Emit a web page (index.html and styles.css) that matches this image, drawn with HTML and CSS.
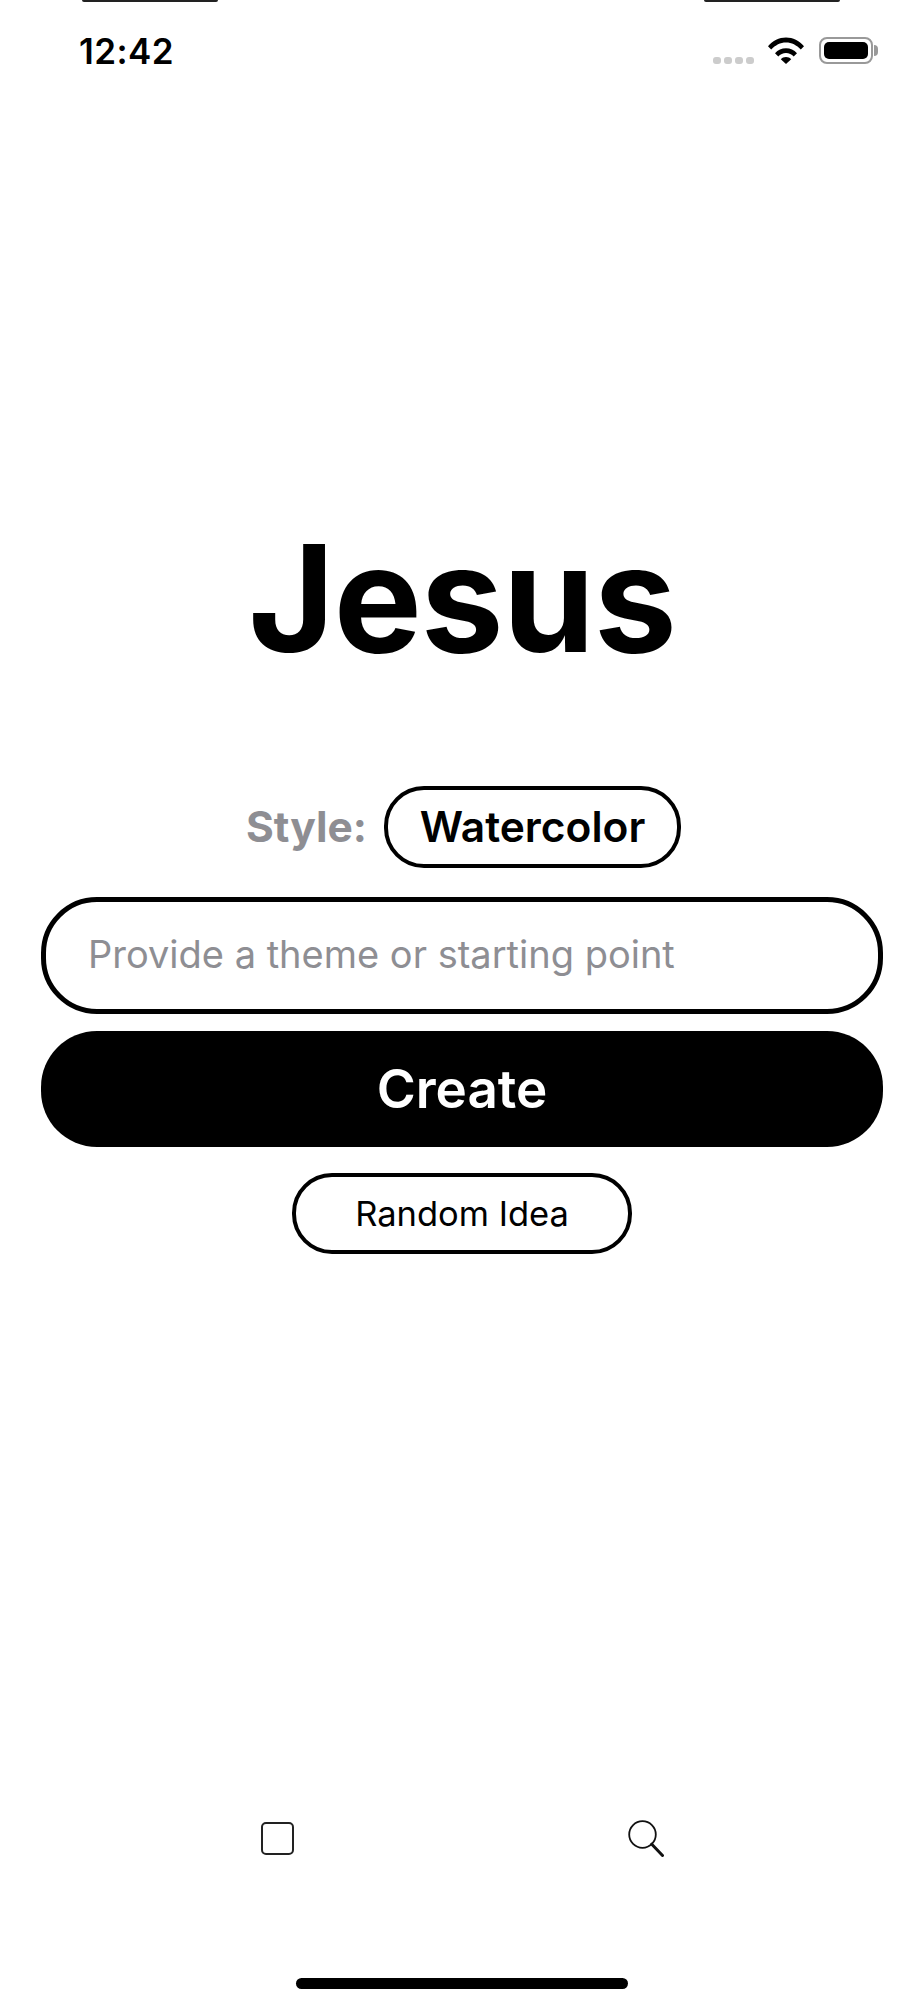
FILE: index.html
```html
<!DOCTYPE html>
<html lang="en">
<head>
<meta charset="utf-8">
<title>Jesus</title>
<link rel="stylesheet" href="styles.css">
</head>
<body>
<div class="phone">
  <div class="sensor-row">
    <span class="sensor-edge"></span>
    <span class="sensor-edge"></span>
  </div>
  <header class="status-bar">
    <span class="clock">12:42</span>
    <div class="status-icons">
      <div class="signal"><i></i><i></i><i></i><i></i></div>
      <svg class="wifi" width="36" height="27" viewBox="0 0 36 27">
        <path d="M0 9.200C4.800 3.500 11 .5 18 .5s13.200 3 18 8.700l-3.200 3.300C28.700 8 23.600 5.400 18 5.400S7.300 8 3.200 12.500z"/>
        <path d="M7 16.200C9.900 13 13.700 11.200 18 11.200s8.100 1.800 11 5l-3.300 3.300c-2-2.200-4.700-3.500-7.700-3.500s-5.700 1.300-7.700 3.500z"/>
        <path d="M12.800 22.200c1.300-1.500 3.100-2.300 5.200-2.300s3.900.8 5.200 2.300L18 27z"/>
      </svg>
      <div class="battery"><div class="battery-level"></div></div>
    </div>
  </header>

  <main class="composer">
    <h1 class="title">Jesus</h1>
    <div class="style-row">
      <span class="style-label">Style:</span>
      <button class="pill pill-style">Watercolor</button>
    </div>
    <div class="theme-input">Provide a theme or starting point</div>
    <button class="create">Create</button>
    <button class="pill pill-random">Random Idea</button>
  </main>

  <nav class="tabs">
    <span class="tab-square"></span>
    <svg class="tab-search" width="36" height="37" viewBox="0 0 36 37" fill="none">
      <circle cx="14.500" cy="14.500" r="13.300" stroke="#111" stroke-width="1.800"/>
      <path d="M23.800 24.200L34.500 35.500" stroke="#111" stroke-width="3" stroke-linecap="round"/>
    </svg>
  </nav>
  <div class="home-indicator"></div>
</div>
</body>
</html>
```
FILE: styles.css
```css
* { box-sizing: border-box; }

html, body {
  margin: 0;
  background: #fff;
}

.phone {
  width: 924px;
  height: 2000px;
  display: flex;
  flex-direction: column;
  font-family: Inter, "Liberation Sans", sans-serif;
  color: #000;
  overflow: hidden;
}

.sensor-row {
  display: flex;
  justify-content: space-between;
  padding: 0 84px 0 82px;
  height: 37px;
}

.sensor-edge {
  width: 136px;
  height: 2px;
  background: #222;
  border-radius: 0 0 8px 8px;
}

.status-bar {
  display: flex;
  justify-content: space-between;
  align-items: center;
  height: 27px;
  padding: 0 51px 0 79px;
}

.clock {
  margin-top: 2px;
  font-size: 35px;
  font-weight: 600;
  line-height: 27px;
  letter-spacing: 0.4px;
}

.status-icons {
  display: flex;
  align-items: flex-start;
}

.signal {
  display: flex;
  gap: 3px;
  margin: 20px 14px 0 0;
}

.signal i {
  width: 8px;
  height: 7px;
  border-radius: 3px;
  background: #ccc;
}

.wifi { margin-right: 15px; }

.battery {
  position: relative;
  width: 54px;
  height: 27px;
  padding: 3px;
  border: 2px solid #999;
  border-radius: 8px;
}

.battery::after {
  content: "";
  position: absolute;
  top: 6px;
  right: -7px;
  width: 4px;
  height: 11px;
  background: #999;
  border-radius: 0 4px 4px 0;
}

.battery-level {
  width: 100%;
  height: 100%;
  background: #000;
  border-radius: 5px;
}

.composer {
  display: flex;
  flex-direction: column;
  align-items: center;
  padding: 0 41px;
}

.title {
  margin: 443px 0 0;
  font-size: 148px;
  line-height: 184px;
  font-weight: 700;
  letter-spacing: -1px;
}

.style-row {
  display: flex;
  align-items: center;
  gap: 17px;
  margin-top: 95px;
  height: 82px;
  padding-left: 3px;
}

.style-label {
  margin-bottom: 2px;
  font-size: 42.500px;
  font-weight: 700;
  color: #8e8e93;
}

.pill {
  font-family: inherit;
  color: #000;
  background: #fff;
  border: 4.500px solid #000;
  border-radius: 40px;
  padding: 0;
}

.pill-style {
  width: 297px;
  height: 82px;
  padding-bottom: 2px;
  font-size: 42.500px;
  font-weight: 600;
}

.theme-input {
  width: 842px;
  height: 117px;
  margin-top: 29px;
  padding: 0 0 3px 42px;
  border: 5px solid #000;
  border-radius: 56px;
  display: flex;
  align-items: center;
  font-size: 38px;
  color: #8e8e93;
}

.create {
  width: 842px;
  height: 116px;
  margin-top: 17px;
  border: 0;
  border-radius: 56px;
  background: #000;
  color: #fff;
  font-family: inherit;
  font-size: 53px;
  font-weight: 600;
}

.pill-random {
  width: 340px;
  height: 81px;
  margin-top: 26px;
  font-size: 34.500px;
  font-weight: 400;
}

.tabs {
  display: flex;
  align-items: center;
  justify-content: space-between;
  margin-top: auto;
  padding: 0 260px 0 261px;
}

.tab-square {
  width: 33px;
  height: 33px;
  border: 2px solid #222;
  border-radius: 5px;
}

.home-indicator {
  width: 332px;
  height: 11px;
  margin: 121px auto 11px;
  background: #000;
  border-radius: 6px;
}
```
